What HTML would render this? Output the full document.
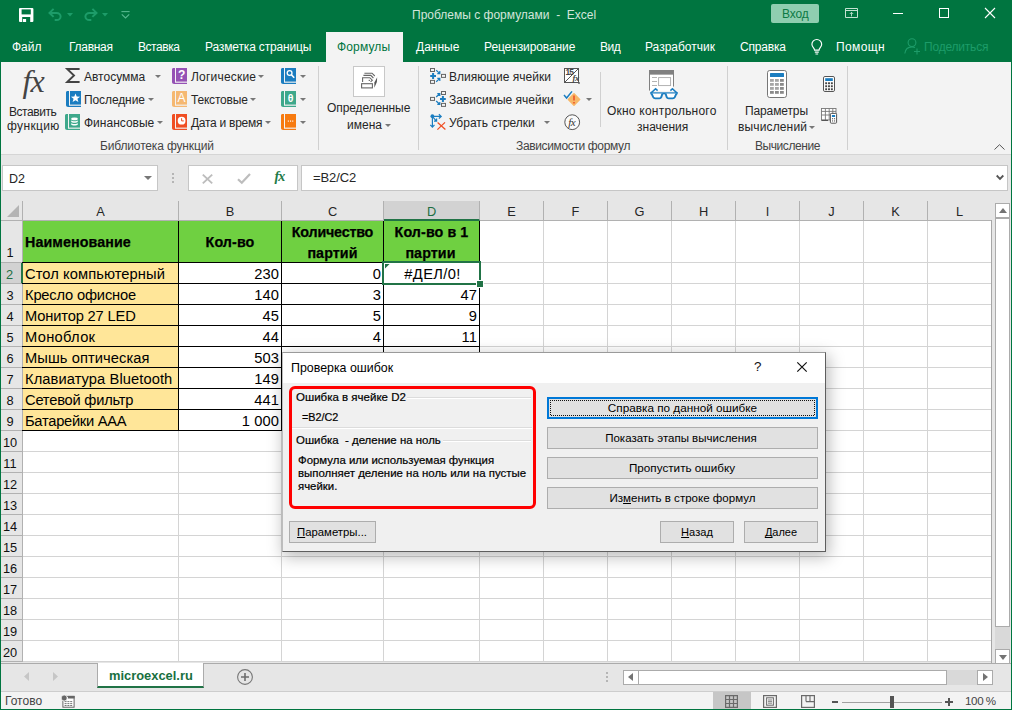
<!DOCTYPE html>
<html lang="ru">
<head>
<meta charset="utf-8">
<title>Проблемы с формулами - Excel</title>
<style>
html,body{margin:0;padding:0;}
body{width:1012px;height:710px;overflow:hidden;position:relative;background:#e6e6e6;font-family:"Liberation Sans",sans-serif;font-size:12px;color:#262626;}
.abs,.t{position:absolute;}
.t{white-space:nowrap;line-height:16px;height:16px;}
.w{color:#fff;}
svg{position:absolute;overflow:visible;}
/* title */
#title{left:0;top:0;width:1012px;height:62px;background:#007540;}
#ribbon{left:1px;top:62px;width:1010px;height:92px;background:#f3f3f3;border-bottom:1px solid #d5d5d5;}
#acttab{left:326px;top:32px;width:77px;height:31px;background:#f3f3f3;}
.sep{position:absolute;width:1px;background:#d0d0d0;}
.lbl{color:#444;}
/* formula bar */
.box{position:absolute;background:#fff;border:1px solid #c6c6c6;box-sizing:border-box;}
/* grid */
#grid{left:1px;top:201px;width:990px;height:461px;background:#fff;}
.ch{position:absolute;top:201px;height:19px;line-height:21px;text-align:center;font-size:12.8px;color:#262626;background:#e6e6e6;border-right:1px solid #b1b1b1;border-bottom:1px solid #b1b1b1;box-sizing:content-box;}
.rh{position:absolute;left:1px;width:18px;padding-right:3px;height:20px;line-height:23px;text-align:center;font-size:12.8px;color:#111;background:#e6e6e6;border-bottom:1px solid #b1b1b1;border-right:1px solid #b1b1b1;}
.vl{position:absolute;top:221px;width:1px;height:441px;background:#d4d4d4;}
.hl{position:absolute;left:23px;width:968px;height:1px;background:#d4d4d4;}
.c{position:absolute;white-space:nowrap;font-size:14.7px;letter-spacing:0.08px;line-height:20px;height:20px;color:#000;}
.r{text-align:right;}
.b{font-weight:bold;font-size:14.3px;text-align:center;-webkit-text-stroke:0.25px #000;}
/* dialog */
#dlg{left:282px;top:352px;width:542px;height:198px;background:#f0f0f0;border:1px solid #5e5e5e;border-left-color:#bdbdbd;border-top-color:#9a9a9a;box-shadow:2px 4px 15px 1px rgba(0,0,0,.27);}
.btn{position:absolute;box-sizing:border-box;border:1px solid #adadad;background:#e1e1e1;text-align:center;font-size:12px;line-height:19px;color:#000;white-space:nowrap;}
.d{position:absolute;white-space:nowrap;font-size:11.5px;line-height:14px;color:#000;-webkit-text-stroke:0.2px #000;}
u{text-decoration-thickness:1px;text-underline-offset:1px;text-decoration-skip-ink:none;}
</style>
</head>
<body>
<!-- TITLE BAR -->
<div id="title" class="abs"></div>
<div id="acttab" class="abs"></div>
<div id="ribbon" class="abs"></div>
<!-- QAT -->
<svg style="left:19px;top:7.6px" width="15" height="14" viewBox="0 0 15 14"><rect x="0" y="0" width="14.4" height="14" rx="1" fill="#fff"/><rect x="2.6" y="1.4" width="9.2" height="5" fill="#007540"/><rect x="3.2" y="9" width="8" height="5" fill="#007540"/><rect x="3.9" y="11" width="3.2" height="3" fill="#fff"/></svg>
<svg style="left:48px;top:8px" width="15" height="13" viewBox="0 0 15 13"><path d="M5.6 0.9L1.5 4.9L5.6 8.9 M1.7 4.9h6.9a4 3.6 0 0 1 0 7.2h-1.9" fill="none" stroke="#1d9c69" stroke-width="2"/></svg>
<svg style="left:67px;top:12.5px" width="6" height="4" viewBox="0 0 6 4"><path d="M0 0h6l-3 3.4z" fill="#1d9c69"/></svg>
<svg style="left:83px;top:8px" width="15" height="13" viewBox="0 0 15 13"><path d="M9.4 0.9L13.5 4.9L9.4 8.9 M13.3 4.9h-6.9a4 3.6 0 0 0 0 7.2h1.9" fill="none" stroke="#1d9c69" stroke-width="2"/></svg>
<svg style="left:102px;top:12.5px" width="6" height="4" viewBox="0 0 6 4"><path d="M0 0h6l-3 3.4z" fill="#1d9c69"/></svg>
<svg style="left:121px;top:10.6px" width="9" height="8" viewBox="0 0 9 8"><path d="M0.4 0.6h8.2" stroke="#55b88f" stroke-width="1.1"/><path d="M0.8 3.4L4.5 7L8.2 3.4" fill="none" stroke="#55b88f" stroke-width="1.2"/></svg>
<div class="t" style="left:412px;top:7px;color:#d3e5db;font-size:12px">Проблемы с формулами&nbsp; -&nbsp; Excel</div>
<div class="abs" style="left:771px;top:4px;width:48px;height:19px;background:#8fceb0;border-radius:2px"></div>
<div class="t" style="left:782px;top:6px;color:#0d7a44;font-size:12px;letter-spacing:-0.1px">Вход</div>
<!-- window buttons -->
<svg style="left:845px;top:8px" width="13" height="10" viewBox="0 0 13 10"><path d="M0.5 0.5h12v9h-12z M0.5 2.5h12" fill="none" stroke="#c4e2d2" stroke-width="1"/><path d="M6.5 8.4V4.4 M4.8 6L6.5 4.3L8.2 6" fill="none" stroke="#c4e2d2" stroke-width="0.9"/></svg>
<div class="abs" style="left:893px;top:13px;width:10px;height:1px;background:#fff"></div>
<div class="abs" style="left:939px;top:8px;width:8px;height:8px;border:1px solid #fff"></div>
<svg style="left:985px;top:8px" width="10" height="10" viewBox="0 0 10 10"><path d="M0 0L10 10M10 0L0 10" stroke="#fff" stroke-width="1.1"/></svg>
<!-- tabs -->
<div class="t w" style="left:12px;top:39px">Файл</div>
<div class="t w" style="left:69px;top:39px;letter-spacing:-0.28px">Главная</div>
<div class="t w" style="left:138px;top:39px;letter-spacing:-0.45px">Вставка</div>
<div class="t w" style="left:205px;top:39px;letter-spacing:-0.15px">Разметка страницы</div>
<div class="t" style="left:337px;top:39px;color:#007540;letter-spacing:0.15px">Формулы</div>
<div class="t w" style="left:416px;top:39px">Данные</div>
<div class="t w" style="left:484px;top:39px;letter-spacing:-0.1px">Рецензирование</div>
<div class="t w" style="left:600px;top:39px;letter-spacing:-0.5px">Вид</div>
<div class="t w" style="left:645px;top:39px">Разработчик</div>
<div class="t w" style="left:740px;top:39px;letter-spacing:-0.2px">Справка</div>
<svg style="left:810.6px;top:38.6px" width="11.6" height="16.2" viewBox="0 0 14 19"><path d="M4.3 13.2c0-2.6-3.2-3.6-3.2-7a5.9 5.9 0 0 1 11.8 0c0 3.4-3.2 4.4-3.2 7z M4.6 15.5h4.8 M5.4 17.8h3.2" fill="none" stroke="#fff" stroke-width="1.4"/></svg>
<div class="t w" style="left:836px;top:39px;letter-spacing:0.4px">Помощн</div>
<svg style="left:904px;top:38px" width="17" height="17" viewBox="0 0 17 17"><circle cx="8" cy="4.6" r="3.9" fill="none" stroke="#1d9c69" stroke-width="1.1"/><path d="M0.8 15.5c0.6-4.4 3.6-6.6 7.2-6.6c1.2 0 2.2 0.2 3 0.7" fill="none" stroke="#1d9c69" stroke-width="1.1"/><path d="M13 10.5v6 M10 13.5h6" stroke="#1d9c69" stroke-width="1.1"/></svg>
<div class="t" style="left:924px;top:39px;color:#1d9c69;letter-spacing:-0.2px">Поделиться</div>

<!-- RIBBON group 1 -->
<div class="t" style="left:22.5px;top:60.5px;font-family:'Liberation Serif',serif;font-style:italic;font-size:32px;line-height:40px;height:40px;color:#444;letter-spacing:-1px">fx</div>
<div class="t" style="left:9px;top:104px;letter-spacing:-0.45px">Вставить</div>
<div class="t" style="left:7px;top:118px;letter-spacing:0.35px">функцию</div>
<svg style="left:65px;top:68px" width="16" height="15" viewBox="0 0 16 15"><path d="M14.6 1H2.2L9 7.5L2.2 14H14.6" fill="none" stroke="#444" stroke-width="1.9" stroke-linejoin="miter"/></svg>

<div class="t" style="left:84px;top:69px">Автосумма</div>
<div class="t" style="left:84px;top:92px;letter-spacing:-0.1px">Последние</div>
<div class="t" style="left:84px;top:115px">Финансовые</div>
<div class="t" style="left:191px;top:69px;letter-spacing:0.2px">Логические</div>
<div class="t" style="left:191px;top:92px;letter-spacing:-0.2px">Текстовые</div>
<div class="t" style="left:191px;top:115px;letter-spacing:-0.27px">Дата и время</div>
<svg style="left:66px;top:91px" width="15" height="16" viewBox="0 0 15 16"><path d="M4 0H15V13.6H4z" fill="#1b7dc0"/><path d="M1.6 0H3V14.8H15V16H2.2C0.8 16 0 15.2 0 14V1.6C0 0.6 0.6 0 1.6 0z" fill="#1b7dc0"/><path d="M9.5 2.4L10.7 5.6L14.1 5.7L11.4 7.8L12.4 11.1L9.5 9.2L6.6 11.1L7.6 7.8L4.9 5.7L8.3 5.6z" fill="#fff"/></svg>
<svg style="left:65px;top:114px" width="15" height="16" viewBox="0 0 15 16"><path d="M4 0H15V13.6H4z" fill="#3ea88b"/><path d="M1.6 0H3V14.8H15V16H2.2C0.8 16 0 15.2 0 14V1.6C0 0.6 0.6 0 1.6 0z" fill="#3ea88b"/><g fill="#fff"><ellipse cx="9.5" cy="4.9" rx="3.3" ry="1.3"/><path d="M6.2 6.3c0.6 1.4 6 1.4 6.6 0v1.5c-0.6 1.4-6 1.4-6.6 0z"/><path d="M6.2 8.9c0.6 1.4 6 1.4 6.6 0v1.5c-0.6 1.4-6 1.4-6.6 0z"/></g></svg>
<svg style="left:172px;top:68px" width="15" height="16" viewBox="0 0 15 16"><path d="M4 0H15V13.6H4z" fill="#9552b5"/><path d="M1.6 0H3V14.8H15V16H2.2C0.8 16 0 15.2 0 14V1.6C0 0.6 0.6 0 1.6 0z" fill="#9552b5"/><text x="9.6" y="11.2" text-anchor="middle" font-family="Liberation Sans,sans-serif" font-weight="bold" font-size="12" fill="#fff">?</text></svg>
<svg style="left:172px;top:91px" width="15" height="16" viewBox="0 0 15 16"><path d="M4 0H15V13.6H4z" fill="#f5b872"/><path d="M1.6 0H3V14.8H15V16H2.2C0.8 16 0 15.2 0 14V1.6C0 0.6 0.6 0 1.6 0z" fill="#f5b872"/><text x="9.6" y="11" text-anchor="middle" font-family="Liberation Sans,sans-serif" font-size="12" fill="#fff">A</text></svg>
<svg style="left:172px;top:114px" width="15" height="16" viewBox="0 0 15 16"><path d="M4 0H15V13.6H4z" fill="#f04e23"/><path d="M1.6 0H3V14.8H15V16H2.2C0.8 16 0 15.2 0 14V1.6C0 0.6 0.6 0 1.6 0z" fill="#f04e23"/><circle cx="9.6" cy="6.7" r="3.9" fill="#fff"/><path d="M9.6 4.2V6.9H11.8" fill="none" stroke="#f04e23" stroke-width="1"/></svg>
<svg style="left:281px;top:68px" width="15" height="16" viewBox="0 0 15 16"><path d="M4 0H15V13.6H4z" fill="#1b7dc0"/><path d="M1.6 0H3V14.8H15V16H2.2C0.8 16 0 15.2 0 14V1.6C0 0.6 0.6 0 1.6 0z" fill="#1b7dc0"/><circle cx="8.6" cy="5" r="2.4" fill="none" stroke="#fff" stroke-width="1.3"/><path d="M10.4 6.8L13.2 9.8" stroke="#fff" stroke-width="1.6"/></svg>
<svg style="left:281px;top:91px" width="15" height="16" viewBox="0 0 15 16"><path d="M4 0H15V13.6H4z" fill="#3ea88b"/><path d="M1.6 0H3V14.8H15V16H2.2C0.8 16 0 15.2 0 14V1.6C0 0.6 0.6 0 1.6 0z" fill="#3ea88b"/><text x="9.6" y="10.8" text-anchor="middle" font-family="Liberation Sans,sans-serif" font-weight="bold" font-size="10.5" fill="#fff">θ</text></svg>
<svg style="left:281px;top:114px" width="15" height="16" viewBox="0 0 15 16"><path d="M4 0H15V13.6H4z" fill="#f77a0f"/><path d="M1.6 0H3V14.8H15V16H2.2C0.8 16 0 15.2 0 14V1.6C0 0.6 0.6 0 1.6 0z" fill="#f77a0f"/><g fill="#fff"><rect x="6.8" y="6.5" width="1.1" height="1.2"/><rect x="9" y="6.5" width="1.1" height="1.2"/><rect x="11.2" y="6.5" width="1.1" height="1.2"/></g></svg>

<div class="t lbl" style="left:100px;top:138px;letter-spacing:-0.15px">Библиотека функций</div>
<div class="sep" style="left:318px;top:66px;height:84px"></div>
<!-- group 2 -->
<div class="abs" style="left:353px;top:66px;width:32px;height:31px;background:#fff;border:1px solid #c8c8c8;box-sizing:border-box"></div>
<svg style="left:360px;top:72px" width="19" height="17" viewBox="0 0 19 17"><g fill="none" stroke="#666" stroke-width="1.1"><rect x="1.6" y="11.7" width="10.8" height="4.2"/><path d="M2.6 10V5.7H9.8L12.3 8.2L10.6 9.9"/><path d="M3.4 3.4H10.8L13.4 6"/><path d="M4.4 1.2H12L14.8 4"/></g><rect x="8.7" y="7.8" width="1.2" height="1.2" fill="#666"/><path d="M17.2 5.2L16.9 10L14.3 15.8L14.4 10.5z" fill="#555"/></svg>

<div class="t" style="left:327px;top:100px;letter-spacing:-0.1px">Определенные</div>
<div class="t" style="left:347px;top:117px">имена</div>
<div class="sep" style="left:418px;top:66px;height:84px"></div>
<!-- group 3 -->
<svg style="left:430px;top:68px" width="16" height="16" viewBox="0 0 16 16"><g fill="none" stroke="#666" stroke-width="1"><rect x="0.5" y="0.5" width="4" height="3"/><rect x="0.5" y="12.4" width="4" height="3"/><rect x="11.5" y="6.4" width="4" height="3"/></g><path d="M0.2 8H6M3.1 5.1V10.9" stroke="#1b7dc0" stroke-width="2"/><g fill="none" stroke="#1b7dc0" stroke-width="1.2"><path d="M6.2 2.2L9.6 5.4M7.3 5.6H9.8V3.1"/><path d="M6.2 13.8L9.6 10.6M7.3 10.4H9.8V12.9"/></g></svg>
<svg style="left:430px;top:91px" width="16" height="16" viewBox="0 0 16 16"><g fill="none" stroke="#666" stroke-width="1"><rect x="0.5" y="6.4" width="4" height="3"/><rect x="11.5" y="0.5" width="4" height="3"/><rect x="11.5" y="12.4" width="4" height="3"/></g><path d="M10 8H15.8M12.9 5.1V10.9" stroke="#1b7dc0" stroke-width="2"/><g fill="none" stroke="#1b7dc0" stroke-width="1.2"><path d="M6.2 6L9.6 2.8M7.3 2.6H9.8V5.1"/><path d="M6.2 10L9.6 13.2M7.3 13.4H9.8V10.9"/></g></svg>
<svg style="left:430px;top:114px" width="16" height="16" viewBox="0 0 16 16"><circle cx="2.4" cy="2.2" r="1.9" fill="#1b7dc0"/><g fill="none" stroke="#1b7dc0" stroke-width="1.2"><path d="M2.4 2.4H11M8.9 0.3L11.2 2.4L8.9 4.5"/><path d="M2.4 2.4V13M0.3 10.9L2.4 13.2L4.5 10.9"/><path d="M2.6 2.6L6.4 7.2M4 7.1H6.6V4.6"/></g><path d="M7.6 8.6L15.4 15.4M15 8.4L7.4 15.6" stroke="#f04e23" stroke-width="1.3"/></svg>

<div class="t" style="left:449px;top:69px">Влияющие ячейки</div>
<div class="t" style="left:449px;top:92px">Зависимые ячейки</div>
<div class="t" style="left:449px;top:115px">Убрать стрелки</div>
<svg style="left:564px;top:68px" width="17" height="17" viewBox="0 0 17 17"><rect x="0.5" y="0.5" width="14" height="14" fill="#fff" stroke="#555" stroke-width="1"/><path d="M1 14L14 1" stroke="#555" stroke-width="1"/><path d="M1 14L5.5 9.6H1zM14 1L9.5 5.4H14z" fill="#ddd" opacity="0"/><text x="1.4" y="7.3" font-family="Liberation Sans,sans-serif" font-weight="bold" font-size="8.4" letter-spacing="-0.7" fill="#444">15</text><text x="8.6" y="13.4" font-family="Liberation Serif,serif" font-style="italic" font-weight="bold" font-size="8.5" letter-spacing="-0.5" fill="#444">fx</text><rect x="14.2" y="14.2" width="1.6" height="1.6" fill="#555"/></svg>
<svg style="left:563px;top:90px" width="19" height="17" viewBox="0 0 19 17"><path d="M11 3.9L16.6 9.5L11 15.1L5.4 9.5z" fill="#f7b768" stroke="#f7b768" stroke-width="1.6" stroke-linejoin="round"/><path d="M11 5.6V10.6M11 11.9V13.4" stroke="#f04e23" stroke-width="1.5"/><path d="M1 5L3.6 8L9 1.4" fill="none" stroke="#1b7dc0" stroke-width="1.5"/></svg>
<svg style="left:564px;top:114px" width="17" height="17" viewBox="0 0 17 17"><circle cx="8.2" cy="8.2" r="7.4" fill="#fafafa" stroke="#555" stroke-width="1"/><text x="4.3" y="11.6" font-family="Liberation Serif,serif" font-style="italic" font-size="11" letter-spacing="-0.6" fill="#333">fx</text></svg>

<div class="sep" style="left:600px;top:72px;height:55px"></div>
<svg style="left:649px;top:70px" width="30" height="30" viewBox="0 0 30 30"><path d="M0.5 20.5V0.5H24.5V16.5" fill="#fff"/><rect x="0" y="0" width="25" height="4.8" fill="#808080"/><path d="M0.5 0V20.6M24.5 0V16.6" stroke="#808080" stroke-width="1"/><rect x="1" y="4.8" width="23" height="16" fill="#fff"/><path d="M3 7.5H8M3 11.5H8M3 15.5H8" stroke="#aaa" stroke-width="0.9"/><rect x="9.6" y="7.6" width="12" height="8" fill="#fff" stroke="#aaa" stroke-width="0.9"/><g fill="none" stroke="#1b7dc0"><path d="M1.4 23.3H28.6" stroke-width="2"/><path d="M1.6 23.4L6.6 18.7L8.6 20.6M28.4 23.4L23.4 18.7L21.4 20.6" stroke-width="1.5"/><path d="M2.6 23.6L4.2 27.2Q4.8 28.4 6.2 28.4H10.4Q11.8 28.4 12.3 27.2L13.4 23.6M27.4 23.6L25.8 27.2Q25.2 28.4 23.8 28.4H19.6Q18.2 28.4 17.7 27.2L16.6 23.6" stroke-width="1.9" fill="#fff"/></g></svg>

<div class="t" style="left:607px;top:103px;letter-spacing:0.22px">Окно контрольного</div>
<div class="t" style="left:637px;top:119px">значения</div>
<div class="t lbl" style="left:516px;top:138px;letter-spacing:-0.36px">Зависимости формул</div>
<div class="sep" style="left:727px;top:66px;height:84px"></div>
<!-- group 4 -->
<svg style="left:767px;top:70px" width="20" height="28" viewBox="0 0 20 28"><rect x="0.5" y="0.5" width="19" height="27" rx="2.2" fill="#fff" stroke="#777" stroke-width="1"/><rect x="3" y="3" width="14" height="4" rx="0.5" fill="#1b7dc0"/><rect x="3" y="9" width="3.8" height="2.8" fill="#a6a6a6"/><rect x="8" y="9" width="3.8" height="2.8" fill="#a6a6a6"/><rect x="13" y="9" width="3.8" height="2.8" fill="#8a8a8a"/><rect x="3" y="13" width="3.8" height="2.8" fill="#a6a6a6"/><rect x="8" y="13" width="3.8" height="2.8" fill="#a6a6a6"/><rect x="13" y="13" width="3.8" height="2.8" fill="#8a8a8a"/><rect x="3" y="17" width="3.8" height="2.8" fill="#a6a6a6"/><rect x="8" y="17" width="3.8" height="2.8" fill="#a6a6a6"/><rect x="13" y="17" width="3.8" height="2.8" fill="#8a8a8a"/><rect x="3" y="21" width="3.8" height="2.8" fill="#8a8a8a"/><rect x="8" y="21" width="3.8" height="2.8" fill="#8a8a8a"/><rect x="13" y="21" width="3.8" height="2.8" fill="#8a8a8a"/></svg>
<svg style="left:823px;top:76px" width="13" height="16" viewBox="0 0 13 16"><rect x="0.5" y="0.5" width="11" height="15" rx="1.4" fill="#fff" stroke="#555" stroke-width="1"/><rect x="2.2" y="2.2" width="7.6" height="2.8" fill="#1b7dc0"/><rect x="2.2" y="6.3" width="1.9" height="1.9" fill="#444"/><rect x="5.05" y="6.3" width="1.9" height="1.9" fill="#444"/><rect x="7.9" y="6.3" width="1.9" height="1.9" fill="#444"/><rect x="2.2" y="9.3" width="1.9" height="1.9" fill="#444"/><rect x="5.05" y="9.3" width="1.9" height="1.9" fill="#444"/><rect x="7.9" y="9.3" width="1.9" height="1.9" fill="#444"/><rect x="2.2" y="12.3" width="1.9" height="1.9" fill="#444"/><rect x="5.05" y="12.3" width="1.9" height="1.9" fill="#444"/><rect x="7.9" y="12.3" width="1.9" height="1.9" fill="#444"/></svg>
<svg style="left:821px;top:108px" width="17" height="16" viewBox="0 0 17 16"><g fill="none" stroke="#777" stroke-width="0.9"><rect x="0.5" y="0.5" width="14.5" height="11.5" fill="#fff"/><path d="M0.5 3.4H15M0.5 7H15M4.4 0.5V12M8.2 0.5V12M11.8 0.5V12"/></g><path d="M0.5 12.4H7" stroke="#555" stroke-width="1.2"/><rect x="9.4" y="5.4" width="6.2" height="9.8" rx="0.8" fill="#fff" stroke="#555" stroke-width="1"/><rect x="10.9" y="7" width="3.2" height="2" fill="#1b7dc0"/><g fill="#555"><rect x="11" y="10.2" width="1.1" height="1.1"/><rect x="13" y="10.2" width="1.1" height="1.1"/><rect x="11" y="12.4" width="1.1" height="1.1"/><rect x="13" y="12.4" width="1.1" height="1.1"/></g></svg>

<div class="t" style="left:745px;top:103px;letter-spacing:-0.12px">Параметры</div>
<div class="t" style="left:738px;top:119px;letter-spacing:0.14px">вычислений</div>
<div class="t lbl" style="left:755px;top:138px;letter-spacing:-0.43px">Вычисление</div>
<div class="sep" style="left:847px;top:66px;height:84px"></div>
<svg style="left:155px;top:75.0px" width="6" height="3" viewBox="0 0 6 3"><path d="M0 0h6l-3 3z" fill="#777"/></svg>
<svg style="left:147.6px;top:98.0px" width="6" height="3" viewBox="0 0 6 3"><path d="M0 0h6l-3 3z" fill="#777"/></svg>
<svg style="left:156.7px;top:121.0px" width="6" height="3" viewBox="0 0 6 3"><path d="M0 0h6l-3 3z" fill="#777"/></svg>
<svg style="left:258.3px;top:75.0px" width="6" height="3" viewBox="0 0 6 3"><path d="M0 0h6l-3 3z" fill="#777"/></svg>
<svg style="left:250.2px;top:98.0px" width="6" height="3" viewBox="0 0 6 3"><path d="M0 0h6l-3 3z" fill="#777"/></svg>
<svg style="left:265.3px;top:121.0px" width="6" height="3" viewBox="0 0 6 3"><path d="M0 0h6l-3 3z" fill="#777"/></svg>
<svg style="left:300.1px;top:75.0px" width="6" height="3" viewBox="0 0 6 3"><path d="M0 0h6l-3 3z" fill="#777"/></svg>
<svg style="left:300.1px;top:98.0px" width="6" height="3" viewBox="0 0 6 3"><path d="M0 0h6l-3 3z" fill="#777"/></svg>
<svg style="left:300.1px;top:121.0px" width="6" height="3" viewBox="0 0 6 3"><path d="M0 0h6l-3 3z" fill="#777"/></svg>
<svg style="left:384.5px;top:123.5px" width="6" height="3" viewBox="0 0 6 3"><path d="M0 0h6l-3 3z" fill="#777"/></svg>
<svg style="left:543.8px;top:121.0px" width="6" height="3" viewBox="0 0 6 3"><path d="M0 0h6l-3 3z" fill="#777"/></svg>
<svg style="left:585.5px;top:98.0px" width="6" height="3" viewBox="0 0 6 3"><path d="M0 0h6l-3 3z" fill="#777"/></svg>
<svg style="left:809.2px;top:125.5px" width="6" height="3" viewBox="0 0 6 3"><path d="M0 0h6l-3 3z" fill="#777"/></svg>

<svg style="left:994px;top:144px" width="11" height="6" viewBox="0 0 11 6"><path d="M0.5 5.5L5.5 0.7L10.5 5.5" fill="none" stroke="#555" stroke-width="1"/></svg>

<!-- FORMULA BAR -->
<div class="box" style="left:2px;top:165px;width:156px;height:26px"></div>
<div class="t" style="left:9px;top:171px;font-size:12.5px">D2</div>
<svg style="left:144px;top:176px" width="8" height="4" viewBox="0 0 8 4"><path d="M0 0h8l-4 4z" fill="#777"/></svg>
<div class="abs" style="left:172px;top:173px;width:2px;height:2px;background:#b5b5b5;box-shadow:0 4px 0 #b5b5b5,0 8px 0 #b5b5b5"></div>
<div class="box" style="left:188px;top:165px;width:110px;height:26px"></div>
<svg style="left:201.5px;top:173.5px" width="11" height="10" viewBox="0 0 11 10"><path d="M0.8 0.6L10.2 9.4M10.2 0.6L0.8 9.4" stroke="#bdbdbd" stroke-width="1.9"/></svg>
<svg style="left:237px;top:172.6px" width="14" height="11" viewBox="0 0 14 11"><path d="M1 6.2L4.8 9.8L13 1" fill="none" stroke="#bdbdbd" stroke-width="2.2"/></svg>
<div class="t" style="left:274.5px;top:169px;font-family:'Liberation Serif',serif;font-style:italic;font-weight:bold;font-size:14px;color:#1e7a48;letter-spacing:-0.8px">fx</div>
<div class="box" style="left:301px;top:165px;width:707px;height:26px"></div>
<div class="t" style="left:313px;top:170px;font-size:13px;letter-spacing:-0.1px">=B2/C2</div>
<svg style="left:996px;top:175px" width="8" height="5" viewBox="0 0 8 5"><path d="M0.7 0.5L4 3.9L7.3 0.5" fill="none" stroke="#555" stroke-width="1.8"/></svg>

<!-- GRID -->
<div id="grid" class="abs"></div>
<div class="abs" style="left:1px;top:201px;width:21px;height:19px;background:#e6e6e6;border-right:1px solid #b1b1b1;border-bottom:1px solid #b1b1b1"></div>
<svg style="left:7px;top:205px" width="12" height="12" viewBox="0 0 12 12"><path d="M12 0V12H0z" fill="#b4b4b4"/></svg>
<div class="ch" style="left:23px;width:155px;">A</div>
<div class="ch" style="left:179px;width:102px;">B</div>
<div class="ch" style="left:282px;width:101px;">C</div>
<div class="ch" style="left:384px;width:95px;background:#d2d2d2;color:#1e6e42;border-bottom:2px solid #217346;height:18px;">D</div>
<div class="ch" style="left:480px;width:63px;">E</div>
<div class="ch" style="left:544px;width:63px;">F</div>
<div class="ch" style="left:608px;width:63px;">G</div>
<div class="ch" style="left:672px;width:63px;">H</div>
<div class="ch" style="left:736px;width:63px;">I</div>
<div class="ch" style="left:800px;width:63px;">J</div>
<div class="ch" style="left:864px;width:63px;">K</div>
<div class="ch" style="left:928px;width:63px;border-right-color:#e6e6e6">L</div>
<div class="vl" style="left:178px"></div><div class="vl" style="left:281px"></div><div class="vl" style="left:383px"></div><div class="vl" style="left:479px"></div><div class="vl" style="left:543px"></div><div class="vl" style="left:607px"></div><div class="vl" style="left:671px"></div><div class="vl" style="left:735px"></div><div class="vl" style="left:799px"></div><div class="vl" style="left:863px"></div><div class="vl" style="left:927px"></div><div class="vl" style="left:991px"></div>
<div class="hl" style="top:262px"></div><div class="hl" style="top:283px"></div><div class="hl" style="top:304px"></div><div class="hl" style="top:325px"></div><div class="hl" style="top:346px"></div><div class="hl" style="top:367px"></div><div class="hl" style="top:388px"></div><div class="hl" style="top:409px"></div><div class="hl" style="top:430px"></div><div class="hl" style="top:451px"></div><div class="hl" style="top:472px"></div><div class="hl" style="top:493px"></div><div class="hl" style="top:514px"></div><div class="hl" style="top:535px"></div><div class="hl" style="top:556px"></div><div class="hl" style="top:577px"></div><div class="hl" style="top:598px"></div><div class="hl" style="top:619px"></div><div class="hl" style="top:640px"></div><div class="hl" style="top:661px"></div>
<div class="rh" style="top:221px;height:41px;line-height:64px;">1</div>
<div class="rh" style="top:263px;background:#d2d2d2;color:#1e6e42;width:17px;border-right:2px solid #217346">2</div>
<div class="rh" style="top:284px">3</div>
<div class="rh" style="top:305px">4</div>
<div class="rh" style="top:326px">5</div>
<div class="rh" style="top:347px">6</div>
<div class="rh" style="top:368px">7</div>
<div class="rh" style="top:389px">8</div>
<div class="rh" style="top:410px">9</div>
<div class="rh" style="top:431px">10</div>
<div class="rh" style="top:452px">11</div>
<div class="rh" style="top:473px">12</div>
<div class="rh" style="top:494px">13</div>
<div class="rh" style="top:515px">14</div>
<div class="rh" style="top:536px">15</div>
<div class="rh" style="top:557px">16</div>
<div class="rh" style="top:578px">17</div>
<div class="rh" style="top:599px">18</div>
<div class="rh" style="top:620px">19</div>
<div class="rh" style="top:641px">20</div>
<div class="abs" style="left:23px;top:221px;width:456px;height:41px;background:#6fd041"></div>
<div class="abs" style="left:23px;top:263px;width:155px;height:167px;background:#ffe699"></div>
<div class="abs" style="left:22px;top:262px;width:458px;height:1px;background:#000"></div><div class="abs" style="left:22px;top:283px;width:458px;height:1px;background:#000"></div><div class="abs" style="left:22px;top:304px;width:458px;height:1px;background:#000"></div><div class="abs" style="left:22px;top:325px;width:458px;height:1px;background:#000"></div><div class="abs" style="left:22px;top:346px;width:458px;height:1px;background:#000"></div><div class="abs" style="left:22px;top:367px;width:458px;height:1px;background:#000"></div><div class="abs" style="left:22px;top:388px;width:458px;height:1px;background:#000"></div><div class="abs" style="left:22px;top:409px;width:458px;height:1px;background:#000"></div><div class="abs" style="left:22px;top:430px;width:458px;height:1px;background:#000"></div>
<div class="abs" style="left:178px;top:221px;width:1px;height:210px;background:#000"></div><div class="abs" style="left:281px;top:221px;width:1px;height:210px;background:#000"></div><div class="abs" style="left:383px;top:221px;width:1px;height:210px;background:#000"></div><div class="abs" style="left:479px;top:221px;width:1px;height:210px;background:#000"></div>
<div class="c b" style="left:25px;top:232px;text-align:left">Наименование</div>
<div class="c b" style="left:179px;top:232px;width:102px">Кол-во</div>
<div class="c b" style="left:282px;top:222px;width:101px;letter-spacing:-0.2px">Количество</div>
<div class="c b" style="left:282px;top:243px;width:101px">партий</div>
<div class="c b" style="left:384px;top:222px;width:95px">Кол-во в 1</div>
<div class="c b" style="left:384px;top:243px;width:93px">партии</div>
<div class="c" style="left:25px;top:264px">Стол компьютерный</div><div class="c r" style="left:179px;top:264px;width:100px">230</div><div class="c r" style="left:282px;top:264px;width:99px">0</div><div class="c" style="left:384px;top:264px;width:97px;text-align:center;letter-spacing:0.35px">#ДЕЛ/0!</div>
<div class="c" style="left:25px;top:285px;letter-spacing:-0.18px">Кресло офисное</div><div class="c r" style="left:179px;top:285px;width:100px">140</div><div class="c r" style="left:282px;top:285px;width:99px">3</div><div class="c r" style="left:384px;top:285px;width:93px">47</div>
<div class="c" style="left:25px;top:306px;letter-spacing:-0.16px">Монитор 27 LED</div><div class="c r" style="left:179px;top:306px;width:100px">45</div><div class="c r" style="left:282px;top:306px;width:99px">5</div><div class="c r" style="left:384px;top:306px;width:93px">9</div>
<div class="c" style="left:25px;top:327px;letter-spacing:0.3px">Моноблок</div><div class="c r" style="left:179px;top:327px;width:100px">44</div><div class="c r" style="left:282px;top:327px;width:99px">4</div><div class="c r" style="left:384px;top:327px;width:93px">11</div>
<div class="c" style="left:25px;top:348px">Мышь оптическая</div><div class="c r" style="left:179px;top:348px;width:100px">503</div>
<div class="c" style="left:25px;top:369px">Клавиатура Bluetooth</div><div class="c r" style="left:179px;top:369px;width:100px">149</div>
<div class="c" style="left:25px;top:390px;letter-spacing:-0.22px">Сетевой фильтр</div><div class="c r" style="left:179px;top:390px;width:100px">441</div>
<div class="c" style="left:25px;top:411px;letter-spacing:-0.27px">Батарейки ААА</div><div class="c r" style="left:179px;top:411px;width:100px">1 000</div>
<div class="abs" style="left:382px;top:261px;width:95px;height:20px;border:2px solid #217346"></div>
<div class="abs" style="left:476px;top:280px;width:6px;height:6px;background:#217346;border:1px solid #fff"></div>
<svg style="left:385px;top:264px" width="5" height="5" viewBox="0 0 5 5"><path d="M0 0H4.6L0 4.6z" fill="#217346"/></svg>
<div class="abs" style="left:992px;top:201px;width:19px;height:462px;background:#e6e6e6"></div>
<div class="abs" style="left:991px;top:220px;width:1px;height:443px;background:#a6a6a6"></div>
<div class="abs" style="left:995px;top:218px;width:15px;height:432px;background:#d9d9d9"></div>
<div class="box" style="left:995px;top:203px;width:15px;height:15px;border-color:#ababab"></div>
<svg style="left:998.5px;top:208px" width="8" height="5" viewBox="0 0 8 5"><path d="M0 5h8l-4-5z" fill="#737373"/></svg>
<div class="box" style="left:995px;top:218px;width:15px;height:409px;border-color:#ababab"></div>
<div class="box" style="left:995px;top:649px;width:15px;height:15px;border-color:#ababab"></div>
<svg style="left:998.5px;top:654.5px" width="8" height="5" viewBox="0 0 8 5"><path d="M0 0h8l-4 5z" fill="#737373"/></svg>

<!-- BOTTOM -->
<div class="abs" style="left:1px;top:663px;width:1010px;height:28px;background:#e6e6e6;border-top:1px solid #ababab;box-sizing:border-box"></div>
<svg style="left:24px;top:672px" width="5" height="9" viewBox="0 0 5 9"><path d="M5 0V9L0 4.5z" fill="#c6c6c6"/></svg>
<svg style="left:53px;top:672px" width="5" height="9" viewBox="0 0 5 9"><path d="M0 0V9L5 4.5z" fill="#c6c6c6"/></svg>
<div class="abs" style="left:97px;top:663px;width:105px;height:23px;background:#fff;border-bottom:2px solid #217346;border-right:1px solid #ababab;border-left:1px solid #ababab;box-sizing:content-box"></div>
<div class="t" style="left:109px;top:668px;font-weight:bold;font-size:12.9px;color:#18703f">microexcel.ru</div>
<svg style="left:236px;top:667.5px" width="18" height="18" viewBox="0 0 18 18"><circle cx="9" cy="9" r="7.4" fill="none" stroke="#777" stroke-width="1.1"/><path d="M9 5v8M5 9h8" stroke="#6e6e6e" stroke-width="1.6"/></svg>
<div class="abs" style="left:606px;top:672px;width:2px;height:2px;background:#b5b5b5;box-shadow:0 4px 0 #b5b5b5,0 8px 0 #b5b5b5"></div>
<div class="box" style="left:623px;top:670px;width:16px;height:15px;border-color:#ababab"></div>
<svg style="left:628px;top:673px" width="5" height="8" viewBox="0 0 5 8"><path d="M5 0V8L0 4z" fill="#737373"/></svg>
<div class="box" style="left:638px;top:670px;width:309px;height:15px;border-color:#ababab"></div>
<div class="abs" style="left:947px;top:670px;width:30px;height:15px;background:#d9d9d9"></div>
<div class="box" style="left:977px;top:670px;width:16px;height:15px;border-color:#ababab"></div>
<svg style="left:983px;top:673px" width="5" height="8" viewBox="0 0 5 8"><path d="M0 0V8L5 4z" fill="#737373"/></svg>
<!-- status -->
<div class="abs" style="left:1px;top:691px;width:1010px;height:18px;background:#f3f3f3;border-top:1px solid #cdcdcd;box-sizing:border-box"></div>
<div class="t" style="left:5px;top:693px;color:#444">Готово</div>
<svg style="left:61px;top:695px" width="14" height="13" viewBox="0 0 14 13"><rect x="1.9" y="1.4" width="11.2" height="10.8" fill="#fff" stroke="#666" stroke-width="1"/><rect x="7" y="0.9" width="6.6" height="2.6" fill="#666"/><circle cx="3.2" cy="3" r="3" fill="#666" stroke="#f3f3f3" stroke-width="0.8"/><path d="M3.6 6.6H12M3.6 8.6H12M3.6 10.5H12" stroke="#666" stroke-width="0.9" stroke-dasharray="2 0.8"/></svg>

<div class="abs" style="left:713px;top:692px;width:38px;height:17px;background:#c6c6c6"></div>
<svg style="left:725px;top:695px" width="13" height="13" viewBox="0 0 13 13"><path d="M0.6 0.6H12.4V12.4H0.6zM0.6 4.5H12.4M0.6 8.5H12.4M4.5 0.6V12.4M8.5 0.6V12.4" fill="none" stroke="#6a6a6a" stroke-width="1.2"/></svg>
<svg style="left:763px;top:695px" width="14" height="13" viewBox="0 0 14 13"><rect x="0.6" y="0.6" width="12.8" height="11.8" fill="none" stroke="#6a6a6a" stroke-width="1.2"/><rect x="3.6" y="2.8" width="6.8" height="7.4" fill="none" stroke="#6a6a6a" stroke-width="1"/><path d="M5 5H9M5 6.6H9M5 8.2H9" stroke="#6a6a6a" stroke-width="0.8"/></svg>
<svg style="left:801px;top:695px" width="14" height="13" viewBox="0 0 14 13"><rect x="0.6" y="0.6" width="12.8" height="11.8" fill="none" stroke="#6a6a6a" stroke-width="1.2"/><path d="M5 0.6V6.6M9 0.6V6.6M5 6.6H13.4" fill="none" stroke="#6a6a6a" stroke-width="1.1"/></svg>

<div class="abs" style="left:832px;top:701px;width:6px;height:2px;background:#555"></div>
<div class="abs" style="left:842px;top:702px;width:100px;height:1px;background:#a0a0a0"></div>
<div class="abs" style="left:890px;top:696px;width:4px;height:12px;background:#555"></div>
<div class="abs" style="left:945px;top:701px;width:8px;height:2px;background:#555"></div>
<div class="abs" style="left:948px;top:698px;width:2px;height:8px;background:#555"></div>
<div class="t" style="left:965px;top:693px;color:#444;font-size:11.6px;letter-spacing:-0.35px;word-spacing:-0.5px">100 %</div>

<!-- DIALOG -->
<div id="dlg" class="abs"></div>
<div class="abs" style="left:283px;top:353px;width:542px;height:30px;background:#fff"></div>
<div class="t" style="left:291px;top:360px;font-size:12.4px;color:#000">Проверка ошибок</div>
<div class="t" style="left:754px;top:359px;font-size:13.4px;color:#111">?</div>
<svg style="left:797px;top:362px" width="10" height="10" viewBox="0 0 10 10"><path d="M0.3 0.3L9.7 9.7M9.7 0.3L0.3 9.7" stroke="#111" stroke-width="1.2"/></svg>
<!-- group lines -->
<div class="abs" style="left:407px;top:397px;width:124px;height:1px;background:#dcdcdc;border-bottom:1px solid #fff"></div>
<div class="abs" style="left:292px;top:427px;width:240px;height:1px;background:#dcdcdc;border-bottom:1px solid #fff"></div>
<div class="abs" style="left:443px;top:440px;width:88px;height:1px;background:#dcdcdc;border-bottom:1px solid #fff"></div>
<div class="d" style="left:296px;top:390px;font-size:11.5px">Ошибка в ячейке D2</div>
<div class="d" style="left:302px;top:410px;font-size:10.8px">=B2/C2</div>
<div class="d" style="left:296px;top:433px;font-size:11.45px">Ошибка&nbsp; - деление на ноль</div>
<div class="d" style="left:298px;top:453px;font-size:11.4px">Формула или используемая функция</div>
<div class="d" style="left:298px;top:466px;font-size:11.44px">выполняет деление на ноль или на пустые</div>
<div class="d" style="left:298px;top:479px;font-size:11.4px">ячейки.</div>
<div class="abs" style="left:289px;top:386px;width:247px;height:123px;border:3px solid #ff0000;border-radius:6px;box-sizing:border-box"></div>
<!-- buttons -->
<div class="btn" style="left:547px;top:397px;width:271px;height:22px;border:2px solid #0078d7;font-size:11.75px;line-height:18px">Справка по данной ошибке</div>
<div class="abs" style="left:550px;top:400px;width:265px;height:1px;background:repeating-linear-gradient(90deg,#111 0 1px,transparent 1px 2px)"></div><div class="abs" style="left:550px;top:415px;width:265px;height:1px;background:repeating-linear-gradient(90deg,transparent 0 1px,#111 1px 2px)"></div><div class="abs" style="left:550px;top:400px;width:1px;height:16px;background:repeating-linear-gradient(180deg,#111 0 1px,transparent 1px 2px)"></div><div class="abs" style="left:814px;top:400px;width:1px;height:16px;background:repeating-linear-gradient(180deg,#111 0 1px,transparent 1px 2px)"></div>
<div class="btn" style="left:547px;top:427px;width:271px;height:22px;font-size:11.5px;line-height:21px;padding-right:3px">Показать этапы вычисления</div>
<div class="btn" style="left:547px;top:457px;width:271px;height:22px;font-size:11.7px;padding-right:1px">Пропустить ошибку</div>
<div class="btn" style="left:547px;top:487px;width:271px;height:22px;font-size:11.55px;line-height:21px">Из<u>м</u>енить в строке формул</div>
<div class="btn" style="left:660px;top:521px;width:74px;height:22px;font-size:11.1px;line-height:20px"><u>Н</u>азад</div>
<div class="btn" style="left:744px;top:521px;width:74px;height:22px;font-size:11px;line-height:20px"><u>Д</u>алее</div>
<div class="btn" style="left:289px;top:521px;width:87px;height:22px;font-size:11.35px;line-height:20px;padding-right:1px"><u>П</u>араметры...</div>

<!-- window border -->
<div class="abs" style="left:0;top:62px;width:1px;height:648px;background:#007540"></div>
<div class="abs" style="left:1011px;top:62px;width:1px;height:648px;background:#007540"></div>
<div class="abs" style="left:0;top:709px;width:1012px;height:1px;background:#007540"></div>
</body>
</html>
